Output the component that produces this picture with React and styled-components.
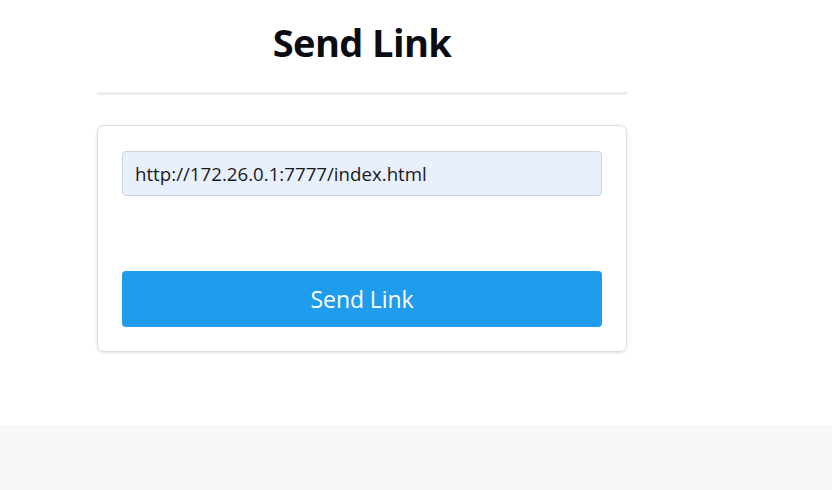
import React from 'react'
import styled, { createGlobalStyle } from 'styled-components'

const GlobalStyle = createGlobalStyle`
  html, body {
    margin: 0;
    padding: 0;
    background: #fff;
  }
  body {
    font-family: "Open Sans", "Noto Sans", sans-serif;
    color: #111;
  }
`

function App() {
  return (
    <>
      <GlobalStyle />
      <Page>
        <Main>
          <Column>
            <Title>Send Link</Title>
            <Divider />
            <Card>
              <UrlInput defaultValue="http://172.26.0.1:7777/index.html" />
              <SendButton type="button">Send Link</SendButton>
            </Card>
          </Column>
        </Main>
        <Footer />
      </Page>
    </>
  )
}

export default App

const Page = styled.div`
  height: 490px;
  display: flex;
  flex-direction: column;
`

const Main = styled.div`
  height: 426px;
  padding-left: 97px;
`

const Column = styled.div`
  width: 530px;
  display: flex;
  flex-direction: column;
`

const Title = styled.h1`
  margin: 0;
  padding-top: 14px;
  height: 58px;
  text-align: center;
  font-size: 38px;
  font-weight: 700;
  line-height: 56px;
  color: #0b0b12;
  letter-spacing: -0.6px;
`

const Divider = styled.div`
  margin-top: 20px;
  height: 3px;
  background: #eeeeee;
`

const Card = styled.div`
  margin-top: 30px;
  height: 227px;
  box-sizing: border-box;
  border: 1px solid #dedede;
  border-radius: 7px;
  box-shadow: 0 1px 3px rgba(0, 0, 0, 0.12);
  padding: 25px 24px 0 24px;
  display: flex;
  flex-direction: column;
`

const UrlInput = styled.input`
  box-sizing: border-box;
  width: 480px;
  height: 45px;
  padding: 0 12px;
  border: 1px solid #ccd3df;
  border-radius: 4px;
  background: #e8f0fe;
  font-family: "Open Sans", "Noto Sans", sans-serif;
  font-size: 18.7px;
  color: #1a1a1a;
  outline: none;
`

const SendButton = styled.button`
  margin-top: 75px;
  width: 480px;
  height: 56px;
  border: none;
  border-radius: 4px;
  background: #209cec;
  color: #fff;
  font-family: "Open Sans", "Noto Sans", sans-serif;
  font-size: 23px;
  letter-spacing: -0.1px;
  cursor: pointer;
`

const Footer = styled.div`
  flex: 1;
  background: #f8f8f8;
  border-top: 1px solid #f2f2f2;
`
